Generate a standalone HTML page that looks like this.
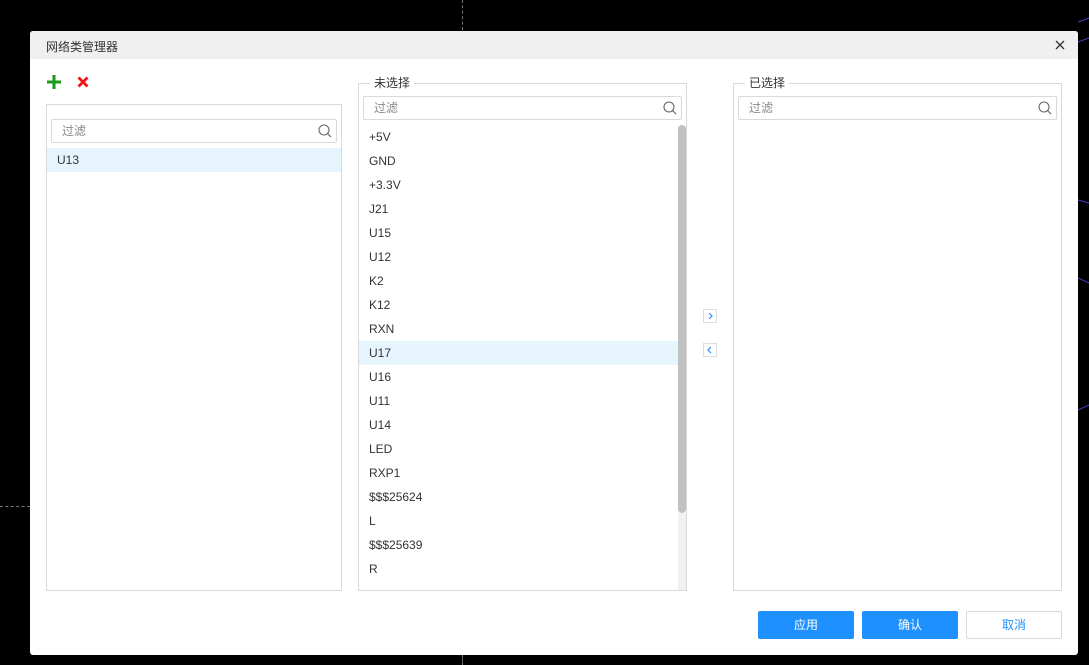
<!DOCTYPE html>
<html><head><meta charset="utf-8"><style>
*{box-sizing:border-box;margin:0;padding:0}
body{width:1089px;height:665px;background:#000;position:relative;overflow:hidden;font-family:"Liberation Sans","Noto Sans CJK SC",sans-serif;font-size:12px;color:#333}
.a{position:absolute}
.dlg{left:30px;top:31px;width:1048px;height:624px;background:#fff;border-radius:3px;overflow:hidden}
.tb{left:0;top:0;width:1048px;height:28px;background:#f0f0f0}
.box{border:1px solid #d9d9d9;background:#fff}
.inp{border:1px solid #d9d9d9;border-radius:2px;background:#fff;color:#888;padding-left:10px;line-height:23px;font-size:12px}
.item{position:absolute;left:10px;font-size:12px;color:#333}
.leg{background:#fff;padding:0 4px;font-size:12px;color:#333;line-height:14px}
.btn{border-radius:2px;background:#1e90ff;color:#fff;text-align:center;line-height:29px;font-size:12px;height:28px;width:96px}
.arr{width:14px;height:14px;border:1px solid #ddd;background:#fff}
</style></head><body>
<div class="a" style="left:462px;top:0;width:1px;height:30px;border-left:1px dashed #777"></div>
<div class="a" style="left:462px;top:655px;width:1px;height:10px;border-left:1px dashed #777"></div>
<div class="a" style="left:0;top:506px;width:30px;height:1px;border-top:1px dashed #777"></div>
<div class="a dlg">
 <div class="a tb"><span class="a" style="left:16px;top:7px;font-size:12px;color:#333">网络类管理器</span>
  <svg class="a" style="left:1025px;top:9px" width="10" height="10"><path d="M1 1L9 9M9 1L1 9" stroke="#333" stroke-width="1.3"/></svg></div>
 <svg class="a" style="left:17px;top:44px" width="14" height="14"><path d="M7 0V14M0 7H14" stroke="#1a9a1a" stroke-width="3"/></svg>
 <svg class="a" style="left:47px;top:45px" width="12" height="12"><path d="M1.5 1.5L10.5 10.5M10.5 1.5L1.5 10.5" stroke="#f0141b" stroke-width="2.8"/></svg>
 <!-- left -->
 <div class="a box" style="left:16px;top:73px;width:296px;height:487px">
  <div class="a inp" style="left:4px;top:14px;width:286px;height:24px">过滤</div>
  <svg class="a" style="left:271px;top:19px" width="14" height="14"><circle cx="6" cy="6" r="5" fill="none" stroke="#666" stroke-width="1.1"/><path d="M9.5 9.5L13 13" stroke="#666" stroke-width="1.2"/></svg>
  <div class="a" style="left:0;top:43px;width:294px;height:24px;background:#e6f4fd"></div>
  <div class="item" style="top:48px">U13</div>
 </div>
 <!-- middle -->
 <div class="a box" style="left:328px;top:52px;width:329px;height:508px">
  <div class="a inp" style="left:4px;top:12px;width:319px;height:24px">过滤</div>
  <svg class="a" style="left:304px;top:17px" width="14" height="14"><circle cx="6" cy="6" r="5" fill="none" stroke="#666" stroke-width="1.1"/><path d="M9.5 9.5L13 13" stroke="#666" stroke-width="1.2"/></svg>
  <div class="a" style="left:0;top:257px;width:319px;height:24px;background:#e6f4fd"></div>
  <div class="a" style="left:319px;top:41px;width:8px;height:388px;background:#c1c1c1;border-radius:4px"></div>
  <div class="a" style="left:319px;top:429px;width:8px;height:77px;background:#f1f1f1"></div>
  <div class="item" style="top:46px">+5V</div>
  <div class="item" style="top:70px">GND</div>
  <div class="item" style="top:94px">+3.3V</div>
  <div class="item" style="top:118px">J21</div>
  <div class="item" style="top:142px">U15</div>
  <div class="item" style="top:166px">U12</div>
  <div class="item" style="top:190px">K2</div>
  <div class="item" style="top:214px">K12</div>
  <div class="item" style="top:238px">RXN</div>
  <div class="item" style="top:262px">U17</div>
  <div class="item" style="top:286px">U16</div>
  <div class="item" style="top:310px">U11</div>
  <div class="item" style="top:334px">U14</div>
  <div class="item" style="top:358px">LED</div>
  <div class="item" style="top:382px">RXP1</div>
  <div class="item" style="top:406px">$$$25624</div>
  <div class="item" style="top:430px">L</div>
  <div class="item" style="top:454px">$$$25639</div>
  <div class="item" style="top:478px">R</div>
 </div>
 <div class="a leg" style="left:340px;top:45px">未选择</div>
 <!-- arrows -->
 <div class="a arr" style="left:673px;top:278px"><svg width="12" height="12"><path d="M5 3L8 6L5 9" fill="none" stroke="#1e90ff" stroke-width="1.2"/></svg></div>
 <div class="a arr" style="left:673px;top:312px"><svg width="12" height="12"><path d="M7 3L4 6L7 9" fill="none" stroke="#1e90ff" stroke-width="1.2"/></svg></div>
 <!-- right -->
 <div class="a box" style="left:703px;top:52px;width:329px;height:508px">
  <div class="a inp" style="left:4px;top:12px;width:319px;height:24px">过滤</div>
  <svg class="a" style="left:304px;top:17px" width="14" height="14"><circle cx="6" cy="6" r="5" fill="none" stroke="#666" stroke-width="1.1"/><path d="M9.5 9.5L13 13" stroke="#666" stroke-width="1.2"/></svg>
 </div>
 <div class="a leg" style="left:715px;top:45px">已选择</div>
 <div class="a btn" style="left:728px;top:580px">应用</div>
 <div class="a btn" style="left:832px;top:580px">确认</div>
 <div class="a btn" style="left:936px;top:580px;background:#fff;border:1px solid #d9d9d9;color:#1e90ff;line-height:27px">取消</div>
</div>
<svg class="a" style="left:1078px;top:0" width="11" height="665"><path d="M0 22L11 18M0 42L11 38M0 200L11 203M0 278L11 283M0 410L11 405" stroke="#4040c0" stroke-width="1"/></svg>
</body></html>
